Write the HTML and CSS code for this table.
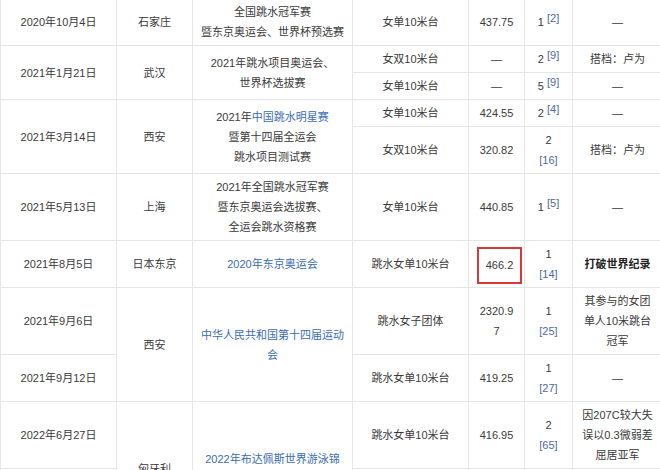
FILE: index.html
```html
<!DOCTYPE html>
<html lang="zh-CN">
<head>
  <meta charset="UTF-8" />
  <meta name="viewport" content="width=device-width, initial-scale=1.0"/>
  <title>参赛记录</title>
  <link rel="stylesheet" href="styles.css">
</head>
<body>
  <!-- Competition record table -->
  <table class="record">
    <colgroup>
      <col class="c-date">
      <col class="c-place">
      <col class="c-event">
      <col class="c-item">
      <col class="c-score">
      <col class="c-rank">
      <col class="c-note">
    </colgroup>
    <tbody>
      <tr>
        <td>2020年10月4日</td>
        <td>石家庄</td>
        <td>全国跳水冠军赛<br>暨东京奥运会、世界杯预选赛</td>
        <td>女单10米台</td>
        <td>437.75</td>
        <td>1 <sup class="ref">[2]</sup></td>
        <td>—</td>
      </tr>
      <tr>
        <td rowspan="2">2021年1月21日</td>
        <td rowspan="2">武汉</td>
        <td rowspan="2">2021年跳水项目奥运会、<br>世界杯选拔赛</td>
        <td>女双10米台</td>
        <td>—</td>
        <td>2 <sup class="ref">[9]</sup></td>
        <td>搭档：卢为</td>
      </tr>
      <tr>
        <td>女单10米台</td>
        <td>—</td>
        <td>5 <sup class="ref">[9]</sup></td>
        <td>—</td>
      </tr>
      <tr>
        <td rowspan="2">2021年3月14日</td>
        <td rowspan="2">西安</td>
        <td rowspan="2">2021年<a href="#">中国跳水明星赛</a><br>暨第十四届全运会<br>跳水项目测试赛</td>
        <td>女单10米台</td>
        <td>424.55</td>
        <td>2 <sup class="ref">[4]</sup></td>
        <td>—</td>
      </tr>
      <tr>
        <td>女双10米台</td>
        <td>320.82</td>
        <td>2<br><span class="ref">[16]</span></td>
        <td>搭档：卢为</td>
      </tr>
      <tr>
        <td>2021年5月13日</td>
        <td>上海</td>
        <td>2021年全国跳水冠军赛<br>暨东京奥运会选拔赛、<br>全运会跳水资格赛</td>
        <td>女单10米台</td>
        <td>440.85</td>
        <td>1 <sup class="ref">[5]</sup></td>
        <td>—</td>
      </tr>
      <tr>
        <td>2021年8月5日</td>
        <td>日本东京</td>
        <td><a href="#">2020年东京奥运会</a></td>
        <td>跳水女单10米台</td>
        <td class="tight"><span class="mark">466.2</span></td>
        <td>1<br><span class="ref">[14]</span></td>
        <td><b>打破世界纪录</b></td>
      </tr>
      <tr>
        <td>2021年9月6日</td>
        <td rowspan="2">西安</td>
        <td rowspan="2"><a href="#">中华人民共和国第十四届运动会</a></td>
        <td>跳水女子团体</td>
        <td>2320.9<br>7</td>
        <td>1<br><span class="ref">[25]</span></td>
        <td>其参与的女团<br>单人10米跳台<br>冠军</td>
      </tr>
      <tr>
        <td>2021年9月12日</td>
        <td>跳水女单10米台</td>
        <td>419.25</td>
        <td>1<br><span class="ref">[27]</span></td>
        <td>—</td>
      </tr>
      <tr>
        <td>2022年6月27日</td>
        <td rowspan="2">匈牙利</td>
        <td rowspan="2"><a href="#">2022年布达佩斯世界游泳锦标赛</a></td>
        <td>跳水女单10米台</td>
        <td>416.95</td>
        <td>2<br><span class="ref">[65]</span></td>
        <td>因207C较大失<br>误以0.3微弱差<br>屈居亚军</td>
      </tr>
      <tr>
        <td>2022年7月2日</td>
        <td>跳水女子团体</td>
        <td>—</td>
        <td>1<br><span class="ref">[66]</span></td>
        <td>—<br>&nbsp;<br>&nbsp;</td>
      </tr>
    </tbody>
  </table>
</body>
</html>
```

FILE: styles.css
```css
/* Reset & base styles */
* {
  margin: 0;
  padding: 0;
  box-sizing: border-box;
}
html, body {
  width: 100%;
  height: 100%;
  overflow: hidden;
  background: #fff;
  font-family: "Liberation Sans", "Noto Sans CJK SC", sans-serif;
  color: #3a3a3a;
}

/* Record table */
.record {
  width: 662px;
  margin-top: -2px;
  table-layout: fixed;
  border-collapse: collapse;
  font-size: 11px;
  line-height: 20px;
}
.c-date  { width: 116px; }
.c-place { width: 76px; }
.c-event { width: 160px; }
.c-item  { width: 116px; }
.c-score { width: 56px; }
.c-rank  { width: 48px; }
.c-note  { width: 90px; }

.record td {
  border: 1px solid #e6e6e6;
  padding: 3px 8px;
  text-align: center;
  vertical-align: middle;
}
.record td.tight {
  padding: 3px 0;
}
.record a {
  color: #3a6cb4;
  text-decoration: none;
}
.record b {
  color: #222;
  font-weight: bold;
}

/* Citation marks */
.ref {
  color: #4f66a6;
}
sup.ref {
  font-size: 11px;
  line-height: 1;
  vertical-align: 4px;
}

/* Highlight box around the record score */
.mark {
  display: inline-block;
  width: 45px;
  height: 37px;
  margin: 3px 0 0 6px;
  border: 2px solid #d6383c;
  line-height: 33px;
}
```
